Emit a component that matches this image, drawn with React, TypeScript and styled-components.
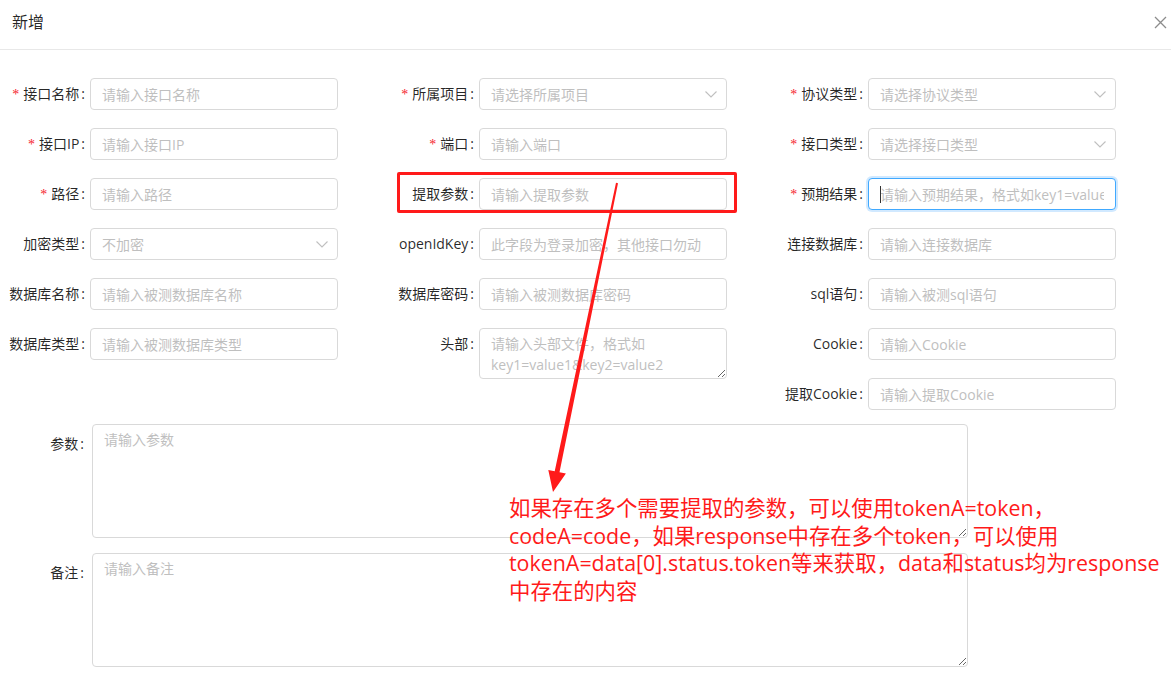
import React from "react"
import styled, { createGlobalStyle, css } from "styled-components"

const GlobalStyle = createGlobalStyle`
    body {
        margin: 0;
        background: #fff;
        font-family: "Open Sans", "Noto Sans CJK SC", sans-serif;
    }
`

const Page = styled.div`
    position: relative;
    width: 1171px;
    height: 691px;
    overflow: hidden;
    background: #fff;
`

const Header = styled.div`
    box-sizing: border-box;
    height: 50px;
    display: flex;
    align-items: flex-start;
    justify-content: space-between;
    padding: 11px 0 0 12px;
    border-bottom: 1px solid #e8e8e8;
`

const Title = styled.span`
    font-size: 16px;
    line-height: 22px;
    color: rgba(0, 0, 0, 0.85);
`

const CloseBtn = styled.button`
    border: 0;
    background: none;
    padding: 0;
    width: 22px;
    height: 22px;
    display: flex;
    align-items: center;
    justify-content: center;
    color: #8c8c8c;
`

const Body = styled.div`
    padding-top: 24px;
`

const Columns = styled.div`
    display: grid;
    grid-template-columns: repeat(3, 389px);
    align-items: start;
`

const Column = styled.div`
    display: flex;
    flex-direction: column;
`

const Item = styled.div`
    display: flex;
    align-items: flex-start;
    min-height: 40px;
    margin-bottom: 10px;
`

const Label = styled.label<{ $width?: number; $gap?: number }>`
    flex: none;
    display: block;
    width: ${(p) => p.$width ?? 90}px;
    height: 40px;
    line-height: 40px;
    text-align: right;
    white-space: nowrap;
    font-size: 14px;
    color: rgba(0, 0, 0, 0.85);

    &::after {
        content: ":";
        margin: 0 ${(p) => p.$gap ?? 5}px 0 2px;
    }
`

const Star = styled.span`
    color: #f5222d;
    margin-right: 4px;
    font-family: "Liberation Serif", serif;
    font-size: 14px;
    line-height: 1;
`

const Control = styled.div<{ $width?: number }>`
    position: relative;
    width: ${(p) => p.$width ?? 248}px;
    padding-top: 4px;
`

const boxBase = css`
    box-sizing: border-box;
    width: 100%;
    border: 1px solid #d9d9d9;
    border-radius: 4px;
    background: #fff;
    font-family: "Open Sans", "Noto Sans CJK SC", sans-serif;
    font-size: 14px;
    color: rgba(0, 0, 0, 0.65);
    outline: none;

    &::placeholder {
        color: #bfbfbf;
    }
`

const TextInput = styled.input<{ $focused?: boolean }>`
    ${boxBase};
    display: block;
    height: 32px;
    padding: 4px 11px;
    ${(p) =>
        p.$focused &&
        css`
            border-color: #40a9ff;
            box-shadow: 0 0 0 2px rgba(24, 144, 255, 0.2);
        `}
`

const Caret = styled.span`
    position: absolute;
    left: 12px;
    top: 12px;
    width: 1px;
    height: 17px;
    background: #333;
`

const SelectBox = styled.div`
    ${boxBase};
    height: 32px;
    padding: 0 24px 0 11px;
    display: flex;
    align-items: center;
`

const SelectText = styled.span`
    color: #bfbfbf;
`

const Chevron = styled.svg`
    position: absolute;
    right: 10px;
    top: 17px;
`

const TextArea = styled.textarea<{ $height: number }>`
    ${boxBase};
    display: block;
    height: ${(p) => p.$height}px;
    padding: 4px 11px;
    line-height: 21px;
    resize: vertical;
    overflow: hidden;
`

const WideItem = styled.div`
    display: flex;
    align-items: flex-start;
    margin-bottom: 15px;
`

const WideControl = styled.div`
    width: 876px;
`

// annotation overlay
const MarkBox = styled.div`
    position: absolute;
    left: 397px;
    top: 172px;
    width: 334px;
    height: 35px;
    border: 3px solid #ff1a1a;
    border-radius: 2px;
`

const ArrowLayer = styled.svg`
    position: absolute;
    left: 0;
    top: 0;
    pointer-events: none;
`

const Note = styled.div`
    position: absolute;
    left: 509px;
    top: 494px;
    font-family: "Open Sans", "Noto Sans CJK SC", sans-serif;
    font-size: 21.4px;
    line-height: 27.7px;
    color: #ff1a1a;
    white-space: nowrap;
`

type Field = {
    label: string
    placeholder: string
    kind?: "input" | "select" | "textarea"
    required?: boolean
    focused?: boolean
}

const col1: Field[] = [
    { label: "接口名称", placeholder: "请输入接口名称", required: true },
    { label: "接口IP", placeholder: "请输入接口IP", required: true },
    { label: "路径", placeholder: "请输入路径", required: true },
    { label: "加密类型", placeholder: "不加密", kind: "select" },
    { label: "数据库名称", placeholder: "请输入被测数据库名称" },
    { label: "数据库类型", placeholder: "请输入被测数据库类型" },
]

const col2: Field[] = [
    { label: "所属项目", placeholder: "请选择所属项目", kind: "select", required: true },
    { label: "端口", placeholder: "请输入端口", required: true },
    { label: "提取参数", placeholder: "请输入提取参数" },
    { label: "openIdKey", placeholder: "此字段为登录加密，其他接口勿动" },
    { label: "数据库密码", placeholder: "请输入被测数据库密码" },
    { label: "头部", placeholder: "请输入头部文件，格式如key1=value1&key2=value2", kind: "textarea" },
]

const col3: Field[] = [
    { label: "协议类型", placeholder: "请选择协议类型", kind: "select", required: true },
    { label: "接口类型", placeholder: "请选择接口类型", kind: "select", required: true },
    { label: "预期结果", placeholder: "请输入预期结果，格式如key1=value1", required: true, focused: true },
    { label: "连接数据库", placeholder: "请输入连接数据库" },
    { label: "sql语句", placeholder: "请输入被测sql语句" },
    { label: "Cookie", placeholder: "请输入Cookie" },
    { label: "提取Cookie", placeholder: "请输入提取Cookie" },
]

const FormField = ({ field }: { field: Field }) => (
    <Item>
        <Label>
            {field.required && <Star>*</Star>}
            {field.label}
        </Label>
        <Control>
            {field.kind === "select" ? (
                <>
                    <SelectBox>
                        <SelectText>{field.placeholder}</SelectText>
                    </SelectBox>
                    <Chevron width="12" height="7" viewBox="0 0 12 7">
                        <polyline points="0.5,0.5 6,6 11.5,0.5" fill="none" stroke="#bfbfbf" strokeWidth="1.1" />
                    </Chevron>
                </>
            ) : field.kind === "textarea" ? (
                <TextArea $height={51} placeholder={field.placeholder} />
            ) : (
                <>
                    <TextInput $focused={field.focused} placeholder={field.placeholder} />
                    {field.focused && <Caret />}
                </>
            )}
        </Control>
    </Item>
)

const App = () => {
    return (
        <Page>
            <GlobalStyle />
            <Header>
                <Title>新增</Title>
                <CloseBtn>
                    <svg width="13" height="13" viewBox="0 0 13 13">
                        <path d="M1 1L12 12M12 1L1 12" stroke="#8c8c8c" strokeWidth="1.3" />
                    </svg>
                </CloseBtn>
            </Header>
            <Body>
                <Columns>
                    {[col1, col2, col3].map((col, i) => (
                        <Column key={i}>
                            {col.map((f) => (
                                <FormField key={f.label} field={f} />
                            ))}
                        </Column>
                    ))}
                </Columns>
                <WideItem>
                    <Label $width={92} $gap={8}>参数</Label>
                    <WideControl>
                        <TextArea $height={114} placeholder="请输入参数" />
                    </WideControl>
                </WideItem>
                <WideItem>
                    <Label $width={92} $gap={8}>备注</Label>
                    <WideControl>
                        <TextArea $height={114} placeholder="请输入备注" />
                    </WideControl>
                </WideItem>
            </Body>

            <MarkBox />
            <ArrowLayer width="1171" height="691" viewBox="0 0 1171 691">
                <polygon
                    points="618,183.2 616,182.8 554.7,471.3 548.3,470 553,492 565.9,473.6 559.5,472.3"
                    fill="#ff1a1a"
                />
            </ArrowLayer>
            <Note>
                <div>如果存在多个需要提取的参数，可以使用tokenA=token，</div>
                <div>codeA=code，如果response中存在多个token，可以使用</div>
                <div>tokenA=data[0].status.token等来获取，data和status均为response</div>
                <div>中存在的内容</div>
            </Note>
        </Page>
    )
}

export default App
